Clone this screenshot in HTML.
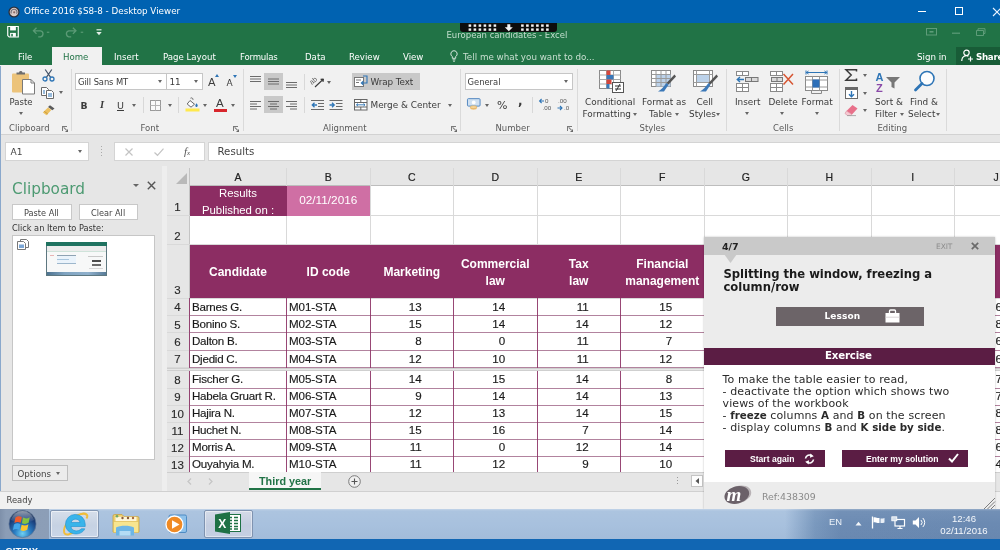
<!DOCTYPE html>
<html lang="en">
<head>
<meta charset="utf-8">
<title>Office 2016 $S8-8 - Desktop Viewer</title>
<style>
*{box-sizing:border-box;margin:0;padding:0}
html,body{width:1000px;height:550px;overflow:hidden;background:#e6e6e6}
body{font-family:"Liberation Sans",sans-serif;font-size:10px;color:#444;position:relative}
.a{position:absolute;white-space:nowrap}
#root{position:absolute;left:0;top:0;width:1000px;height:550px;overflow:hidden;will-change:transform}
.t{position:absolute;white-space:nowrap;line-height:1}
.w{color:#fff}
svg{position:absolute;overflow:visible}
/* title */
#titlebar{left:0;top:0;width:1000px;height:22.500px;background:#0062b1}
#green{left:0;top:22.500px;width:1000px;height:43.500px;padding-top:.5px;background:#217346}
#ribbon{left:0;top:65px;width:1000px;height:70px;background:#f1f1f1;border-bottom:1px solid #d2d2d2}
#fbar{left:0;top:135px;width:1000px;height:33px;background:#e6e6e6}
.tab{font-size:8.600px;color:#fff;top:51px;font-family:"DejaVu Sans","Liberation Sans",sans-serif}
.dj{font-family:"DejaVu Sans","Liberation Sans",sans-serif}
.grp{font-size:8.500px;color:#5a5a5a;top:124px;font-family:"DejaVu Sans","Liberation Sans",sans-serif}
.lbl{font-size:10px;color:#3b3b3b;font-family:"DejaVu Sans","Liberation Sans",sans-serif}
.sep{position:absolute;top:69px;width:1px;height:62px;background:#dadada}
.launch{position:absolute;top:125.500px;width:5px;height:5px;border-left:1px solid #7a7a7a;border-top:1px solid #7a7a7a}
.launch:after{content:"";position:absolute;left:2px;top:2px;width:0;height:0;border-left:3.500px solid transparent;border-bottom:3.500px solid #6a6a6a}
.launch:before{content:"";position:absolute;left:1px;top:.5px;width:4px;height:1px;background:#7a7a7a;transform:rotate(45deg);transform-origin:0 0}
.dd{position:absolute;width:0;height:0;border-left:2.5px solid transparent;border-right:2.5px solid transparent;border-top:3px solid #666}
.box{position:absolute;background:#fff;border:1px solid #c6c6c6}
.ch{font-size:10.500px;color:#222;-webkit-text-stroke:.2px #222}
.rh{font-size:11.500px;color:#2a2a2a;-webkit-text-stroke:.15px #2a2a2a}
.hw{font-size:12px;font-weight:bold;color:#fff}
.cd{font-size:11.600px;color:#1a1a1a;letter-spacing:-.1px;-webkit-text-stroke:.15px #1a1a1a}
#panel{left:704px;top:237px;width:291px;height:272px;background:#fff;font-family:"DejaVu Sans","Liberation Sans",sans-serif;box-shadow:0 0 2px rgba(0,0,0,.25)}
#panel .pt{position:absolute;white-space:nowrap;line-height:1}
.pb{position:absolute;background:#5b1d44}
#ptext b{font-size:10.300px;letter-spacing:0;line-height:0}
#ptext p{height:12px;line-height:12px;overflow:visible}
</style>
</head>
<body>
<div id="root">
<!-- ===== Citrix desktop viewer title bar ===== -->
<div id="titlebar" class="a">
  <svg style="left:8px;top:5.500px" width="12" height="12" viewBox="0 0 12 12"><circle cx="6" cy="6" r="5.600" fill="#2b2f3a"/><circle cx="6" cy="6" r="4.300" fill="#d9c9c6"/><path d="M3.300 7.500A3 3 0 1 1 8.600 7.800" fill="none" stroke="#6d6a72" stroke-width="1.100"/><circle cx="6.200" cy="6.300" r="1.100" fill="#8a6a64"/></svg>
  <span class="t w dj" style="left:24px;top:7.200px;font-size:8.750px">Office 2016 $S8-8 - Desktop Viewer</span>
  <div class="a" style="left:918px;top:11px;width:8px;height:1px;background:#fff"></div>
  <div class="a" style="left:955px;top:7px;width:8px;height:8px;border:1px solid #fff"></div>
  <svg style="left:993px;top:7.500px" width="8" height="8" viewBox="0 0 8 8"><path d="M0 0L8 8M8 0L0 8" stroke="#eaf4ff" stroke-width="1.100"/></svg>
</div>
<!-- ===== Excel title / QAT / tabs ===== -->
<div id="green" class="a">
  <!-- save -->
  <svg style="left:7px;top:3.500px" width="12" height="11.500" viewBox="0 0 12 12"><path d="M0.5 0.5H11.5V11.5H2L0.5 10Z" fill="none" stroke="#fff" stroke-width="1.2"/><rect x="3" y="1" width="6" height="3.6" fill="#fff"/><rect x="3" y="7.2" width="6" height="4" fill="#fff"/><rect x="4.2" y="8.2" width="1.6" height="2.6" fill="#217346"/></svg>
  <!-- undo -->
  <svg style="left:32px;top:4px" width="22" height="10.500" viewBox="0 0 22 11"><path d="M1 4H8.5A3.3 3.3 0 0 1 8.5 10.4H6M4.2 0.8L1 4L4.2 7.2" fill="none" stroke="#5b9a76" stroke-width="1.4"/><path d="M15 5.5H17.6" stroke="#5b9a76" stroke-width="1.2"/></svg>
  <!-- redo -->
  <svg style="left:64px;top:4px" width="22" height="10.500" viewBox="0 0 22 11"><path d="M12 4H4.5A3.3 3.3 0 0 0 4.5 10.4H7M8.8 0.8L12 4L8.8 7.2" fill="none" stroke="#5b9a76" stroke-width="1.4"/><path d="M17 5.5H19.6" stroke="#5b9a76" stroke-width="1.2"/></svg>
  <!-- customize qat -->
  <svg style="left:96px;top:6px" width="6" height="7" viewBox="0 0 6 7"><path d="M0.5 0.8H5.5" stroke="#e4efe8" stroke-width="1.2"/><path d="M0.3 3L3 6.2L5.7 3Z" fill="#e4efe8"/></svg>
  <span class="t dj" style="left:446.500px;top:8.500px;font-size:8.500px;color:#c4dfcf">European candidates - Excel</span>
  <!-- window ctrls (dimmed) -->
  <svg style="left:926px;top:5px" width="60" height="9" viewBox="0 0 60 9"><rect x="0.5" y="0.5" width="10" height="6.5" fill="none" stroke="#5e9c79" stroke-width="1"/><path d="M3.5 3.8H7.5" stroke="#5e9c79" stroke-width="1.6"/><path d="M26 5.2H34" stroke="#5e9c79" stroke-width="1.2"/><path d="M50.5 2.5H57.5V7.5H50.5ZM52 2.5V0.7H59V5.5H57.5" fill="none" stroke="#5e9c79" stroke-width="1"/></svg>
  <!-- tabs -->
  <span class="t tab" style="left:18px;top:30.500px">File</span>
  <div class="a" style="left:52px;top:24px;width:50px;height:19px;background:#f1f1f1"></div>
  <span class="t tab" style="left:63px;top:30.500px;color:#217346">Home</span>
  <span class="t tab" style="left:114px;top:30.500px">Insert</span>
  <span class="t tab" style="left:163px;top:30.500px">Page Layout</span>
  <span class="t tab" style="left:240px;top:30.500px;letter-spacing:-.2px">Formulas</span>
  <span class="t tab" style="left:305px;top:30.500px">Data</span>
  <span class="t tab" style="left:349px;top:30.500px">Review</span>
  <span class="t tab" style="left:403px;top:30.500px">View</span>
  <svg style="left:450px;top:27px" width="8" height="12" viewBox="0 0 8 12"><path d="M4 0.7A3.2 3.2 0 0 1 5.7 6.6V8.3H2.3V6.6A3.2 3.2 0 0 1 4 0.7Z" fill="none" stroke="#d6e6dc" stroke-width="1"/><path d="M2.6 9.8H5.4M3 11.2H5" stroke="#d6e6dc" stroke-width="0.9"/></svg>
  <span class="t dj" style="left:463px;top:30.500px;font-size:8.750px;color:#c9dfd1">Tell me what you want to do...</span>
  <span class="t w dj" style="left:917px;top:30px;font-size:8.700px">Sign in</span>
  <div class="a" style="left:956px;top:24px;width:44px;height:18px;background:#185c37"></div>
  <svg style="left:961px;top:26px" width="13" height="13" viewBox="0 0 13 13"><circle cx="5.5" cy="3.8" r="2.7" fill="none" stroke="#fff" stroke-width="1.2"/><path d="M0.8 12V11A4.6 4.6 0 0 1 7.4 7.2" fill="none" stroke="#fff" stroke-width="1.2"/><path d="M9.5 7.5V12.5M7 10H12" stroke="#fff" stroke-width="1.2"/></svg>
  <span class="t w dj" style="left:976px;top:30px;font-size:8.700px;font-weight:bold;letter-spacing:-.3px">Share</span>
</div>
<!-- Citrix toolbar handle -->
<div class="a" style="left:459.5px;top:22.5px;width:97px;height:9.5px;background:#0d0d0d;border-radius:0 0 3px 3px"></div>
<svg style="left:459.5px;top:22.5px" width="97" height="9.5" viewBox="0 0 97 9.5">
  <g fill="#f4f4f4">
    <rect x="8.6" y="1.4" width="2.6" height="2.4"/><rect x="13.6" y="1.4" width="2.6" height="2.4"/><rect x="18.6" y="1.4" width="2.6" height="2.4"/><rect x="23.6" y="1.4" width="2.6" height="2.4"/><rect x="28.6" y="1.4" width="2.6" height="2.4"/><rect x="33.6" y="1.4" width="2.6" height="2.4"/><rect x="8.6" y="5.4" width="2.6" height="2.4"/><rect x="13.6" y="5.4" width="2.6" height="2.4"/><rect x="18.6" y="5.4" width="2.6" height="2.4"/><rect x="23.6" y="5.4" width="2.6" height="2.4"/><rect x="28.6" y="5.4" width="2.6" height="2.4"/><rect x="33.6" y="5.4" width="2.6" height="2.4"/><rect x="61.1" y="1.4" width="2.6" height="2.4"/><rect x="66.1" y="1.4" width="2.6" height="2.4"/><rect x="71.1" y="1.4" width="2.6" height="2.4"/><rect x="76.1" y="1.4" width="2.6" height="2.4"/><rect x="81.1" y="1.4" width="2.6" height="2.4"/><rect x="86.1" y="1.4" width="2.6" height="2.4"/><rect x="61.1" y="5.4" width="2.6" height="2.4"/><rect x="66.1" y="5.4" width="2.6" height="2.4"/><rect x="71.1" y="5.4" width="2.6" height="2.4"/><rect x="76.1" y="5.4" width="2.6" height="2.4"/><rect x="81.1" y="5.4" width="2.6" height="2.4"/><rect x="86.1" y="5.4" width="2.6" height="2.4"/>
    <path d="M47.3 1.2H50.3V4.2H52.8L48.8 8.2L44.8 4.2H47.3Z"/>
  </g>
</svg>
<!-- ===== Ribbon ===== -->
<div id="ribbon" class="a"></div>
<!-- Clipboard group -->
<svg style="left:11px;top:70px" width="25" height="25" viewBox="0 0 25 25">
  <rect x="1" y="3.5" width="17" height="19" rx="1" fill="#ecc37a"/>
  <path d="M5.5 4.5V2.5H8A1.8 1.8 0 0 1 11.5 2.5H14V4.5Z" fill="#6d6d6d"/>
  <path d="M11.5 9.5H20L23.5 13V24H11.5Z" fill="#fff" stroke="#7a7a7a" stroke-width="1"/>
  <path d="M20 9.5V13H23.5" fill="none" stroke="#7a7a7a" stroke-width="1"/>
</svg>
<span class="t lbl" style="left:9.5px;top:98px;font-size:8.5px">Paste</span>
<div class="dd" style="left:19px;top:112px"></div>
<!-- cut -->
<svg style="left:42px;top:69px" width="13" height="13" viewBox="0 0 13 13"><path d="M3.2 0.5L8.8 8.6M9.8 0.5L4.2 8.6" stroke="#44546a" stroke-width="1.2" fill="none"/><circle cx="3" cy="10" r="2" fill="none" stroke="#2e75b6" stroke-width="1.3"/><circle cx="10" cy="10" r="2" fill="none" stroke="#2e75b6" stroke-width="1.3"/></svg>
<!-- copy -->
<svg style="left:41px;top:87px" width="14" height="12" viewBox="0 0 14 12"><path d="M0.5 0.5H5.5L7.5 2.5V8.5H0.5Z" fill="#fff" stroke="#6a6a6a" stroke-width="1"/><path d="M5.5 3.5H10.5L12.5 5.5V11.5H5.5Z" fill="#fff" stroke="#6a6a6a" stroke-width="1"/><path d="M7 7H11M7 9H11" stroke="#2e75b6" stroke-width="1"/><path d="M2 4H4M2 6H4" stroke="#2e75b6" stroke-width="1"/></svg>
<div class="dd" style="left:59px;top:91px"></div>
<!-- format painter -->
<svg style="left:42px;top:104px" width="14" height="12" viewBox="0 0 14 12"><path d="M8 1.2L12.5 4.5L10.3 6.2L6 3Z" fill="#5a5a5a"/><path d="M6 3.4L9.3 6L4.5 11.2L0.8 8.6Z" fill="#ecc060"/><path d="M2.2 7.3L5.8 10" stroke="#c99b3a" stroke-width="1"/></svg>
<span class="t grp" style="left:9px">Clipboard</span>
<div class="launch" style="left:62px"></div>
<div class="sep" style="left:71px"></div>

<!-- Font group -->
<div class="box" style="left:75px;top:73px;width:92px;height:17px"></div>
<span class="t lbl" style="left:78px;top:78px;font-size:8.4px;letter-spacing:-.1px">Gill Sans MT</span>
<div class="dd" style="left:158px;top:80px"></div>
<div class="box" style="left:166px;top:73px;width:37px;height:17px"></div>
<span class="t lbl" style="left:169.5px;top:78px;font-size:8.8px">11</span>
<div class="dd" style="left:194px;top:80px"></div>
<span class="t lbl" style="left:208px;top:76.5px;font-size:11px">A</span>
<svg style="left:215px;top:74px" width="4" height="3" viewBox="0 0 4 3"><path d="M0 3L2 0L4 3Z" fill="#2e75b6"/></svg>
<span class="t lbl" style="left:226.5px;top:78.5px;font-size:9px">A</span>
<svg style="left:232.5px;top:75px" width="4" height="3" viewBox="0 0 4 3"><path d="M0 0L2 3L4 0Z" fill="#2e75b6"/></svg>
<span class="t lbl" style="left:80.5px;top:100.5px;font-size:9.3px;font-weight:bold">B</span>
<span class="t lbl" style="left:100px;top:100px;font-size:10.5px;font-style:italic;font-family:'Liberation Serif',serif;font-weight:bold">I</span>
<span class="t lbl" style="left:117px;top:100.5px;font-size:9.5px;text-decoration:underline">U</span>
<div class="dd" style="left:132px;top:104px"></div>
<div class="a" style="left:143px;top:97px;width:1px;height:16px;background:#d8d8d8"></div>
<svg style="left:150px;top:100px" width="11" height="11" viewBox="0 0 11 11"><rect x="0.5" y="0.5" width="10" height="10" fill="#fafafa" stroke="#9a9a9a" stroke-width="1"/><path d="M5.5 0.5V10.5M0.5 5.5H10.5" stroke="#b5b5b5" stroke-width="1"/></svg>
<div class="dd" style="left:168px;top:104px"></div>
<div class="a" style="left:178px;top:97px;width:1px;height:16px;background:#d8d8d8"></div>
<svg style="left:185px;top:97px" width="16" height="15" viewBox="0 0 16 15"><path d="M5 3.5L9.5 7.2L6 10.2L2.2 7Z" fill="#fff" stroke="#666" stroke-width="1"/><path d="M5.5 1.2A1.6 1.6 0 0 1 8 2.8" fill="none" stroke="#666" stroke-width="1"/><path d="M11.5 6.3C12.6 7.8 13.2 8.6 12.4 9.4A1.1 1.1 0 0 1 10.6 9.4C9.9 8.6 10.6 7.6 11.5 6.3Z" fill="#2e75b6"/><rect x="0.5" y="11.5" width="14" height="3" fill="#ffe94d"/></svg>
<div class="dd" style="left:203px;top:104px"></div>
<span class="t" style="left:216px;top:98px;font-size:11.5px;color:#3b3b3b">A</span>
<div class="a" style="left:213.5px;top:109px;width:13px;height:3px;background:#d8262c"></div>
<div class="dd" style="left:231px;top:104px"></div>
<span class="t grp" style="left:140.5px">Font</span>
<div class="launch" style="left:233px"></div>
<div class="sep" style="left:243px"></div>

<!-- Alignment group -->
<div class="a" style="left:264px;top:73px;width:19px;height:17px;background:#c9c9c9"></div>
<div class="a" style="left:264px;top:96px;width:19px;height:17px;background:#c9c9c9"></div>
<svg style="left:249px;top:73px" width="52" height="40" viewBox="0 0 52 40">
  <g stroke="#6b6b6b" stroke-width="1" fill="none">
    <path d="M1 3.5H12M1 6H12M1 8.5H12"/>
    <path d="M19 6H30M19 8.5H30M19 11H30"/>
    <path d="M37 9.5H48M37 12H48M37 14.5H48"/>
    <path d="M1 28.5H12M1 31H8M1 33.5H12M1 36H8"/>
    <path d="M19 28.5H30M21 31H28M19 33.5H30M21 36H28"/>
    <path d="M37 28.5H48M41 31H48M37 33.5H48M41 36H48"/>
  </g>
</svg>
<div class="a" style="left:304px;top:74px;width:1px;height:16px;background:#d8d8d8"></div>
<div class="a" style="left:304px;top:97px;width:1px;height:16px;background:#d8d8d8"></div>
<svg style="left:311px;top:75px" width="14" height="13" viewBox="0 0 14 13"><text x="0" y="8" font-family="Liberation Sans,sans-serif" font-size="7" fill="#555" transform="rotate(-40 3 8)">ab</text><path d="M4 12L12.5 4M12.5 4L9.6 4.4M12.5 4L12 7" stroke="#3a3a3a" stroke-width="1.1" fill="none"/></svg>
<div class="dd" style="left:327px;top:81px"></div>
<svg style="left:311px;top:100px" width="32" height="11" viewBox="0 0 32 11">
  <g stroke="#6b6b6b" stroke-width="1" fill="none"><path d="M0 0.5H13M7 3.5H13M7 6.5H13M0 9.5H13"/><path d="M18.5 0.5H31.500M25 3.500H31.500M25 6.500H31.500M18.500 9.500H31.500"/></g>
  <path d="M6 5H1.500M3.500 2.800L1.300 5L3.500 7.200" stroke="#2e75b6" stroke-width="1.3" fill="none"/>
  <path d="M18.500 5H23M21 2.800L23.200 5L21 7.200" stroke="#2e75b6" stroke-width="1.3" fill="none"/>
</svg>
<div class="a" style="left:352px;top:73px;width:68px;height:17px;background:#c9c9c9"></div>
<svg style="left:354px;top:75px" width="14" height="13" viewBox="0 0 14 13"><rect x="0.5" y="2.500" width="9" height="9" fill="#fff" stroke="#777" stroke-width="1"/><path d="M2 5H7M2 7.500H5" stroke="#777" stroke-width="1"/><path d="M9 1H13V8H7.500M9.300 6.200L7.300 8L9.300 9.800" fill="none" stroke="#2e75b6" stroke-width="1.100"/></svg>
<span class="t lbl" style="left:370.5px;top:78px;font-size:8.8px;letter-spacing:-.1px">Wrap Text</span>
<svg style="left:354px;top:99px" width="14" height="12" viewBox="0 0 14 12"><rect x="0.500" y="0.500" width="12.500" height="10.500" fill="#fff" stroke="#666" stroke-width="1"/><path d="M0.500 3.500H13M0.500 8H13M6.800 0.500V3.500M6.800 8V11" stroke="#666" stroke-width="1"/><path d="M2.500 5.800H11M4 4.500L2.500 5.800L4 7.100M9.500 4.500L11 5.800L9.500 7.100" fill="none" stroke="#2e75b6" stroke-width=".9"/></svg>
<span class="t lbl" style="left:370.5px;top:101px;font-size:8.9px">Merge &amp; Center</span>
<div class="dd" style="left:448px;top:104px"></div>
<span class="t grp" style="left:323px">Alignment</span>
<div class="launch" style="left:451px"></div>
<div class="sep" style="left:460px"></div>
<!-- Number group -->
<div class="box" style="left:465px;top:73px;width:108px;height:17px"></div>
<span class="t lbl" style="left:467.5px;top:78px;font-size:8.4px">General</span>
<div class="dd" style="left:564px;top:80px"></div>
<svg style="left:466.500px;top:98px" width="14" height="12.500" viewBox="0 0 15 13"><rect x="0.500" y="0.500" width="13.500" height="8" rx="1" fill="#cfe0f1" stroke="#4a82bd" stroke-width="1"/><circle cx="7.200" cy="4.500" r="2" fill="#fff"/><ellipse cx="7" cy="10.800" rx="3.600" ry="1.500" fill="#f0c27a"/><ellipse cx="7" cy="9.600" rx="3.600" ry="1.500" fill="#f6d59a" stroke="#d8a048" stroke-width=".5"/></svg>
<div class="dd" style="left:485px;top:104px"></div>
<span class="t lbl" style="left:497px;top:99.500px;font-size:11px">%</span>
<span class="t lbl" style="left:518px;top:95px;font-size:12px;font-weight:bold">,</span>
<div class="a" style="left:532px;top:97px;width:1px;height:16px;background:#d8d8d8"></div>
<svg style="left:539px;top:98px" width="32" height="13" viewBox="0 0 32 13">
  <g font-family="Liberation Sans,sans-serif" font-size="6.200" fill="#555"><text x="6" y="5">0</text><text x="3.500" y="12">.00</text><text x="19" y="5">.00</text><text x="25" y="12">.0</text></g>
  <path d="M5 3H0.800M2.600 1L0.600 3L2.600 5" fill="none" stroke="#2e75b6" stroke-width="1.100"/>
  <path d="M18.500 10H23M21 8L23 10L21 12" fill="none" stroke="#2e75b6" stroke-width="1.100"/>
</svg>
<span class="t grp" style="left:495.500px">Number</span>
<div class="launch" style="left:567px"></div>
<div class="sep" style="left:577px"></div>

<!-- Styles group -->
<svg style="left:599px;top:70px" width="26" height="24" viewBox="0 0 26 24">
  <rect x="0.500" y="0.500" width="21" height="18" fill="#fff" stroke="#8a8a8a" stroke-width="1"/>
  <path d="M0.500 5H21.500M0.500 9.500H21.500M0.500 14H21.500M7.500 0.500V18.500M14.500 0.500V18.500" stroke="#a9a9a9" stroke-width="1"/>
  <rect x="7.500" y="0.500" width="4" height="4.500" fill="#d4473d"/><rect x="7.500" y="5" width="7" height="4.500" fill="#3b78b8"/><rect x="7.500" y="9.500" width="5" height="4.500" fill="#d4473d"/><rect x="7.500" y="14" width="3" height="4.500" fill="#3b78b8"/>
  <rect x="13.500" y="12.500" width="11" height="10" fill="#fff" stroke="#555" stroke-width="1"/>
  <path d="M16 16H22M16 19H22M21 14L17 21" stroke="#333" stroke-width="1"/>
</svg>
<span class="t lbl" style="left:585px;top:98px;font-size:8.900px">Conditional</span>
<span class="t lbl" style="left:582.500px;top:110px;font-size:8.900px">Formatting</span>
<div class="dd" style="left:633px;top:113px"></div>
<svg style="left:651px;top:70px" width="26" height="24" viewBox="0 0 26 24">
  <rect x="0.500" y="0.500" width="19" height="16" fill="#fff" stroke="#8a8a8a" stroke-width="1"/>
  <rect x="5" y="4.500" width="14.500" height="12" fill="#bcd2ea"/>
  <path d="M0.500 4.500H19.500M0.500 8.500H19.500M0.500 12.500H19.500M5 0.500V16.500M10 0.500V16.500M15 0.500V16.500" stroke="#9a9a9a" stroke-width="1"/>
  <path d="M23.500 4.500L25 6.500L17.500 14.500L15.500 13Z" fill="#555"/>
  <path d="M15.500 13L17.500 14.800L13 21.500L7 21.500C10 20 12.500 17 15.500 13Z" fill="#3b78b8"/>
</svg>
<span class="t lbl" style="left:642px;top:98px;font-size:8.900px">Format as</span>
<span class="t lbl" style="left:649px;top:110px;font-size:8.900px">Table</span>
<div class="dd" style="left:675px;top:113px"></div>
<svg style="left:693px;top:70px" width="26" height="24" viewBox="0 0 26 24">
  <rect x="0.500" y="0.500" width="19" height="16" fill="#fff" stroke="#8a8a8a" stroke-width="1"/>
  <rect x="3.500" y="4.500" width="13" height="8" fill="#bcd2ea"/>
  <path d="M0.500 4.500H19.500M0.500 12.500H19.500M3.500 0.500V16.500M16.500 0.500V16.500" stroke="#9a9a9a" stroke-width="1"/>
  <path d="M23.500 4.500L25 6.500L17.500 14.500L15.500 13Z" fill="#555"/>
  <path d="M15.500 13L17.500 14.800L13 21.500L7 21.500C10 20 12.500 17 15.500 13Z" fill="#3b78b8"/>
</svg>
<span class="t lbl" style="left:696.500px;top:98px;font-size:8.900px">Cell</span>
<span class="t lbl" style="left:689px;top:110px;font-size:8.900px">Styles</span>
<div class="dd" style="left:716px;top:113px"></div>
<span class="t grp" style="left:639.500px">Styles</span>
<div class="sep" style="left:726px"></div>

<!-- Cells group -->
<svg style="left:736px;top:71px" width="23" height="22" viewBox="0 0 23 22">
  <g fill="#fff" stroke="#8a8a8a" stroke-width="1"><rect x="0.500" y="0.500" width="6" height="4"/><rect x="6.500" y="0.500" width="6" height="4"/><rect x="0.500" y="12.500" width="6" height="4"/><rect x="6.500" y="12.500" width="6" height="4"/><rect x="0.500" y="16.500" width="6" height="4"/><rect x="6.500" y="16.500" width="6" height="4"/></g>
  <rect x="9.500" y="6.500" width="12.500" height="4" fill="#d9d9d9" stroke="#777" stroke-width="1"/><path d="M15.500 6.500V10.500" stroke="#777"/>
  <path d="M8 8.500H1.500M4 6L1.300 8.500L4 11" fill="none" stroke="#2e75b6" stroke-width="1.400"/>
</svg>
<span class="t lbl" style="left:735px;top:98px;font-size:8.900px">Insert</span>
<div class="dd" style="left:744.500px;top:112px"></div>
<svg style="left:770px;top:71px" width="25" height="22" viewBox="0 0 25 22">
  <g fill="#fff" stroke="#8a8a8a" stroke-width="1"><rect x="0.500" y="0.500" width="6" height="4"/><rect x="6.500" y="0.500" width="6" height="4"/><rect x="0.500" y="12.500" width="6" height="4"/><rect x="6.500" y="12.500" width="6" height="4"/><rect x="0.500" y="16.500" width="6" height="4"/><rect x="6.500" y="16.500" width="6" height="4"/></g>
  <rect x="1.500" y="6.500" width="11" height="4" fill="#d9d9d9" stroke="#777" stroke-width="1"/><path d="M7 6.500V10.500" stroke="#777"/>
  <path d="M13.500 3L23 13.500M23 3L13.500 13.500" stroke="#d65532" stroke-width="1.500"/>
</svg>
<span class="t lbl" style="left:768.500px;top:98px;font-size:8.900px">Delete</span>
<div class="dd" style="left:779.500px;top:112px"></div>
<svg style="left:805px;top:70px" width="23" height="24" viewBox="0 0 23 24">
  <path d="M1 2.500H22M1 0.500V4.500M22 0.500V4.500M3.500 1L1.500 2.500L3.500 4M19.500 1L21.500 2.500L19.500 4" fill="none" stroke="#2e75b6" stroke-width="1"/>
  <rect x="0.500" y="6.500" width="22" height="14" fill="#fff" stroke="#8a8a8a" stroke-width="1"/>
  <path d="M0.500 10H22.500M0.500 17H22.500M7.500 6.500V20.500M14.500 6.500V20.500" stroke="#9a9a9a" stroke-width="1"/>
  <rect x="7.500" y="9.500" width="7" height="8" fill="#2e6fb8"/>
  <path d="M6.500 20.500V23.500H16.500V20.500" fill="none" stroke="#8a8a8a" stroke-width="1"/>
</svg>
<span class="t lbl" style="left:801.500px;top:98px;font-size:8.900px">Format</span>
<div class="dd" style="left:814.500px;top:112px"></div>
<span class="t grp" style="left:773px">Cells</span>
<div class="sep" style="left:839px"></div>

<!-- Editing group -->
<svg style="left:845px;top:69px" width="13" height="12" viewBox="0 0 13 12"><path d="M11.500 2.500V0.800H1L6.200 6L1 11.200H11.500V9.500" fill="none" stroke="#3a3a3a" stroke-width="1.500"/></svg>
<div class="dd" style="left:863px;top:74px"></div>
<svg style="left:845px;top:87px" width="13" height="12" viewBox="0 0 13 12"><rect x="0.500" y="0.500" width="12" height="11" fill="#fff" stroke="#6a6a6a" stroke-width="1"/><rect x="0.500" y="0.500" width="12" height="2.500" fill="#6a6a6a"/><path d="M6.500 4V9.500M4 7.200L6.500 9.800L9 7.200" fill="none" stroke="#2e75b6" stroke-width="1.400"/></svg>
<div class="dd" style="left:863px;top:92px"></div>
<svg style="left:844px;top:104px" width="15" height="12" viewBox="0 0 15 12"><path d="M8.500 1L13.500 4.500L8 10.500L2.500 7Z" fill="#e8708a"/><path d="M2.500 7L8 10.500L6.800 11.500H3.500L1 9.500Z" fill="#f6c9d2" stroke="#d8889a" stroke-width=".6"/><path d="M3 11.600H12" stroke="#999" stroke-width=".8"/></svg>
<div class="dd" style="left:863px;top:109px"></div>
<svg style="left:875px;top:70px" width="27" height="24" viewBox="0 0 27 24">
  <text x="0.500" y="10.500" font-family="Liberation Sans,sans-serif" font-weight="bold" font-size="11" fill="#2e75b6">A</text>
  <text x="1" y="21.500" font-family="Liberation Sans,sans-serif" font-weight="bold" font-size="11" fill="#8a4aa8">Z</text>
  <path d="M11 7H25L19.500 12.500V18.500L16.500 17V12.500Z" fill="#777"/>
</svg>
<span class="t lbl" style="left:875px;top:98px;font-size:8.900px">Sort &amp;</span>
<span class="t lbl" style="left:875px;top:110px;font-size:8.900px">Filter</span>
<div class="dd" style="left:899.500px;top:113px"></div>
<svg style="left:912px;top:70px" width="24" height="24" viewBox="0 0 24 24"><circle cx="15" cy="8.500" r="7" fill="#fdfdfd" stroke="#2e75b6" stroke-width="1.600"/><path d="M10 13.500L3.500 20" stroke="#2e75b6" stroke-width="2.800" stroke-linecap="round"/></svg>
<span class="t lbl" style="left:910px;top:98px;font-size:8.900px">Find &amp;</span>
<span class="t lbl" style="left:908px;top:110px;font-size:8.900px">Select</span>
<div class="dd" style="left:935.500px;top:113px"></div>
<span class="t grp" style="left:877.500px">Editing</span>
<div class="sep" style="left:946px"></div>
<!-- ===== Formula bar ===== -->
<div id="fbar" class="a"></div>
<div class="box" style="left:5px;top:142px;width:84px;height:19px;border-color:#d4d4d4"></div>
<span class="t dj" style="left:10.500px;top:147.500px;font-size:9.100px;color:#444">A1</span>
<div class="dd" style="left:78px;top:150px"></div>
<div class="a" style="left:101px;top:146px;width:1px;height:1px;background:#aaa;box-shadow:0 3px 0 #aaa,0 6px 0 #aaa,0 9px 0 #aaa"></div>
<div class="box" style="left:114px;top:142px;width:91px;height:19px;border-color:#d4d4d4"></div>
<svg style="left:125px;top:148px" width="8" height="8" viewBox="0 0 8 8"><path d="M0.500 0.500L7.500 7.500M7.500 0.500L0.500 7.500" stroke="#c3c3c3" stroke-width="1.200"/></svg>
<svg style="left:154px;top:148px" width="10" height="8" viewBox="0 0 10 8"><path d="M0.500 4.500L3.500 7.300L9.500 0.700" fill="none" stroke="#c3c3c3" stroke-width="1.200"/></svg>
<span class="t" style="left:184px;top:146px;font-size:11px;color:#555;font-family:'Liberation Serif',serif;font-style:italic">f<span style="font-size:7px">x</span></span>
<div class="box" style="left:208px;top:142px;width:800px;height:19px;border-color:#d4d4d4"></div>
<span class="t dj" style="left:217.500px;top:146.800px;font-size:10.200px;color:#444">Results</span>
<!-- ===== Clipboard task pane ===== -->
<div class="a" style="left:0;top:166px;width:165px;height:326px;background:#e6e6e6"></div>
<div class="a" style="left:0;top:66px;width:1px;height:442px;background:#8aa8cc"></div>
<span class="t dj" style="left:12px;top:182px;font-size:15.300px;color:#4d9a72">Clipboard</span>
<div class="dd" style="left:133px;top:184px;border-left-width:3px;border-right-width:3px;border-top-width:3.500px"></div>
<svg style="left:147px;top:181px" width="9" height="9" viewBox="0 0 9 9"><path d="M0.800 0.800L8.200 8.200M8.200 0.800L0.800 8.200" stroke="#555" stroke-width="1.400"/></svg>
<div class="box" style="left:12px;top:204px;width:60px;height:16px;border-color:#c8c8c8"></div>
<span class="t dj" style="left:24px;top:208.500px;font-size:8.200px;color:#444">Paste All</span>
<div class="box" style="left:79px;top:204px;width:59px;height:16px;border-color:#c8c8c8"></div>
<span class="t dj" style="left:91px;top:208.500px;font-size:8.200px;color:#444">Clear All</span>
<span class="t dj" style="left:12px;top:224px;font-size:8.200px;color:#333">Click an Item to Paste:</span>
<div class="box" style="left:12px;top:235px;width:143px;height:225px;border-color:#c6c6c6"></div>
<svg style="left:17px;top:239px" width="14" height="12" viewBox="0 0 14 12"><path d="M3.500 0.500H9.500L11.500 2.500V8.500H3.500Z" fill="#fff" stroke="#777" stroke-width="1"/><path d="M0.500 2.500H6.500L8.500 4.500V10.500H0.500Z" fill="#fff" stroke="#777" stroke-width="1"/><rect x="2" y="5.500" width="5" height="3.500" fill="#7aa6d6"/></svg>
<!-- thumbnail -->
<div class="a" style="left:45.500px;top:241.500px;width:61px;height:34px;background:#f7f8f8;border:1px solid #5d7780"></div>
<div class="a" style="left:45.500px;top:241.500px;width:61px;height:4.500px;background:#1f7260"></div>
<div class="a" style="left:46.500px;top:246px;width:59px;height:6px;background:#ececec;border-bottom:1px solid #cfe3da"></div>
<div class="a" style="left:50px;top:255px;width:4px;height:1px;background:#e8b4b4"></div>
<div class="a" style="left:57px;top:255px;width:19px;height:9px;background:#eaf3fb;border-top:1.500px solid #8fa3b3;border-bottom:1.500px solid #9db7cc"></div>
<div class="a" style="left:57px;top:259px;width:12px;height:1px;background:#a9c6de"></div>
<div class="a" style="left:88px;top:256px;width:15px;height:1px;background:#c9c9c9"></div>
<div class="a" style="left:91.500px;top:259.500px;width:9.500px;height:2px;background:#4a4a4a"></div>
<div class="a" style="left:91.500px;top:263.500px;width:9.500px;height:2px;background:#6a6a6a"></div>
<div class="a" style="left:89px;top:268px;width:14px;height:1px;background:#d6d6d6"></div>
<div class="a" style="left:46.500px;top:271.500px;width:59px;height:3px;background:linear-gradient(90deg,#4d7390,#7fa3c0 30%,#8fb0cc 70%,#587b98)"></div>
<div class="box" style="left:12px;top:465px;width:56px;height:16px;border-color:#bdbdbd;background:#ececec"></div>
<span class="t dj" style="left:17.500px;top:469.500px;font-size:8.700px;color:#444">Options</span>
<div class="dd" style="left:56px;top:472px"></div>
<!-- ===== Worksheet grid ===== -->
<div class="a" id="grid" style="left:166px;top:168px;width:834px;height:304px;background:#fff;overflow:hidden">
<div class="a" style="left:0.0px;top:-0.5px;width:834.0px;height:18.0px;background:#e6e6e6;border-bottom:1px solid #bdbdbd"></div>
<div class="a" style="left:0.0px;top:0.0px;width:23.5px;height:304.0px;background:#e6e6e6;border-right:1px solid #c4c4c4"></div>
<svg style="left:10px;top:5px" width="11" height="11" viewBox="0 0 11 11"><path d="M11 0V11H0Z" fill="#b9b9b9"/></svg>
<div class="a" style="left:120.0px;top:0.0px;width:1.0px;height:304.0px;background:#d9d9d9"></div>
<div class="a" style="left:203.5px;top:0.0px;width:1.0px;height:304.0px;background:#d9d9d9"></div>
<div class="a" style="left:287.0px;top:0.0px;width:1.0px;height:304.0px;background:#d9d9d9"></div>
<div class="a" style="left:370.5px;top:0.0px;width:1.0px;height:304.0px;background:#d9d9d9"></div>
<div class="a" style="left:454.0px;top:0.0px;width:1.0px;height:304.0px;background:#d9d9d9"></div>
<div class="a" style="left:537.5px;top:0.0px;width:1.0px;height:304.0px;background:#d9d9d9"></div>
<div class="a" style="left:621.0px;top:0.0px;width:1.0px;height:304.0px;background:#d9d9d9"></div>
<div class="a" style="left:704.5px;top:0.0px;width:1.0px;height:304.0px;background:#d9d9d9"></div>
<div class="a" style="left:788.0px;top:0.0px;width:1.0px;height:304.0px;background:#d9d9d9"></div>
<div class="a" style="left:0.0px;top:47.1px;width:834.0px;height:1.0px;background:#d9d9d9"></div>
<div class="a" style="left:0.0px;top:76.1px;width:834.0px;height:1.0px;background:#d9d9d9"></div>
<div class="a" style="left:0.0px;top:129.9px;width:834.0px;height:1.0px;background:#d9d9d9"></div>
<div class="a" style="left:0.0px;top:147.1px;width:834.0px;height:1.0px;background:#d9d9d9"></div>
<div class="a" style="left:0.0px;top:164.4px;width:834.0px;height:1.0px;background:#d9d9d9"></div>
<div class="a" style="left:0.0px;top:181.6px;width:834.0px;height:1.0px;background:#d9d9d9"></div>
<div class="a" style="left:0.0px;top:198.9px;width:834.0px;height:1.0px;background:#d9d9d9"></div>
<div class="a" style="left:0.0px;top:219.6px;width:834.0px;height:1.0px;background:#d9d9d9"></div>
<div class="a" style="left:0.0px;top:236.7px;width:834.0px;height:1.0px;background:#d9d9d9"></div>
<div class="a" style="left:0.0px;top:253.8px;width:834.0px;height:1.0px;background:#d9d9d9"></div>
<div class="a" style="left:0.0px;top:270.9px;width:834.0px;height:1.0px;background:#d9d9d9"></div>
<div class="a" style="left:0.0px;top:288.0px;width:834.0px;height:1.0px;background:#d9d9d9"></div>
<div class="a" style="left:0.0px;top:305.1px;width:834.0px;height:1.0px;background:#d9d9d9"></div>
<span class="t ch" style="left:62.0px;top:3.6px;width:20px;text-align:center">A</span>
<span class="t ch" style="left:152.2px;top:3.6px;width:20px;text-align:center">B</span>
<span class="t ch" style="left:235.8px;top:3.6px;width:20px;text-align:center">C</span>
<span class="t ch" style="left:319.2px;top:3.6px;width:20px;text-align:center">D</span>
<span class="t ch" style="left:402.8px;top:3.6px;width:20px;text-align:center">E</span>
<span class="t ch" style="left:486.2px;top:3.6px;width:20px;text-align:center">F</span>
<span class="t ch" style="left:569.8px;top:3.6px;width:20px;text-align:center">G</span>
<span class="t ch" style="left:653.2px;top:3.6px;width:20px;text-align:center">H</span>
<span class="t ch" style="left:736.8px;top:3.6px;width:20px;text-align:center">I</span>
<span class="t ch" style="left:820.2px;top:3.6px;width:20px;text-align:center">J</span>
<span class="t rh" style="left:0;top:33.8px;width:23px;text-align:center">1</span>
<span class="t rh" style="left:0;top:62.8px;width:23px;text-align:center">2</span>
<span class="t rh" style="left:0;top:116.6px;width:23px;text-align:center">3</span>
<span class="t rh" style="left:0;top:134.3px;width:23px;text-align:center">4</span>
<span class="t rh" style="left:0;top:151.5px;width:23px;text-align:center">5</span>
<span class="t rh" style="left:0;top:168.8px;width:23px;text-align:center">6</span>
<span class="t rh" style="left:0;top:186.0px;width:23px;text-align:center">7</span>
<span class="t rh" style="left:0;top:206.9px;width:23px;text-align:center">8</span>
<span class="t rh" style="left:0;top:224.0px;width:23px;text-align:center">9</span>
<span class="t rh" style="left:0;top:241.1px;width:23px;text-align:center">10</span>
<span class="t rh" style="left:0;top:258.2px;width:23px;text-align:center">11</span>
<span class="t rh" style="left:0;top:275.3px;width:23px;text-align:center">12</span>
<span class="t rh" style="left:0;top:292.4px;width:23px;text-align:center">13</span>
<div class="a" style="left:23.5px;top:17.5px;width:97.0px;height:30.5px;background:#8c2d63"></div>
<div class="a" style="left:120.5px;top:17.5px;width:83.5px;height:30.5px;background:#cf6fa4"></div>
<div class="a" style="left:23.5px;top:76.6px;width:810.5px;height:53.8px;background:#8c2d63"></div>
<span class="t hw" style="left:23.5px;top:19.5px;width:97px;text-align:center;font-weight:normal;font-size:11.4px">Results</span>
<span class="t hw" style="left:23.5px;top:36.5px;width:97px;text-align:center;font-weight:normal;font-size:11.4px">Published on :</span>
<span class="t hw" style="left:120.5px;top:27px;width:83.5px;text-align:center;font-weight:normal;font-size:11.8px">02/11/2016</span>
<span class="t hw" style="left:23.5px;top:97.5px;width:97.0px;text-align:center">Candidate</span>
<span class="t hw" style="left:120.5px;top:97.5px;width:83.5px;text-align:center">ID code</span>
<span class="t hw" style="left:204.0px;top:97.5px;width:83.5px;text-align:center">Marketing</span>
<span class="t hw" style="left:287.5px;top:89.5px;width:83.5px;text-align:center">Commercial</span>
<span class="t hw" style="left:287.5px;top:106.5px;width:83.5px;text-align:center">law</span>
<span class="t hw" style="left:371.0px;top:89.5px;width:83.5px;text-align:center">Tax</span>
<span class="t hw" style="left:371.0px;top:106.5px;width:83.5px;text-align:center">law</span>
<span class="t hw" style="left:454.5px;top:89.5px;width:83.5px;text-align:center">Financial</span>
<span class="t hw" style="left:454.5px;top:106.5px;width:83.5px;text-align:center">management</span>
<div class="a" style="left:23.0px;top:130.4px;width:1.0px;height:173.6px;background:#8c2d63;opacity:.85"></div>
<div class="a" style="left:120.0px;top:130.4px;width:1.0px;height:173.6px;background:#8c2d63;opacity:.85"></div>
<div class="a" style="left:203.5px;top:130.4px;width:1.0px;height:173.6px;background:#8c2d63;opacity:.85"></div>
<div class="a" style="left:287.0px;top:130.4px;width:1.0px;height:173.6px;background:#8c2d63;opacity:.85"></div>
<div class="a" style="left:370.5px;top:130.4px;width:1.0px;height:173.6px;background:#8c2d63;opacity:.85"></div>
<div class="a" style="left:454.0px;top:130.4px;width:1.0px;height:173.6px;background:#8c2d63;opacity:.85"></div>
<div class="a" style="left:537.5px;top:130.4px;width:1.0px;height:173.6px;background:#8c2d63;opacity:.85"></div>
<div class="a" style="left:23.5px;top:147.1px;width:810.5px;height:1.0px;background:#8c2d63;opacity:.5"></div>
<div class="a" style="left:23.5px;top:164.4px;width:810.5px;height:1.0px;background:#8c2d63;opacity:.5"></div>
<div class="a" style="left:23.5px;top:181.6px;width:810.5px;height:1.0px;background:#8c2d63;opacity:.5"></div>
<div class="a" style="left:23.5px;top:198.9px;width:810.5px;height:1.0px;background:#8c2d63;opacity:.5"></div>
<div class="a" style="left:23.5px;top:219.6px;width:810.5px;height:1.0px;background:#8c2d63;opacity:.5"></div>
<div class="a" style="left:23.5px;top:236.7px;width:810.5px;height:1.0px;background:#8c2d63;opacity:.5"></div>
<div class="a" style="left:23.5px;top:253.8px;width:810.5px;height:1.0px;background:#8c2d63;opacity:.5"></div>
<div class="a" style="left:23.5px;top:270.9px;width:810.5px;height:1.0px;background:#8c2d63;opacity:.5"></div>
<div class="a" style="left:23.5px;top:288.0px;width:810.5px;height:1.0px;background:#8c2d63;opacity:.5"></div>
<div class="a" style="left:23.5px;top:305.1px;width:810.5px;height:1.0px;background:#8c2d63;opacity:.5"></div>
<span class="t cd" style="left:26.0px;top:132.8px;letter-spacing:-.25px">Barnes G.</span>
<span class="t cd" style="left:123.0px;top:132.8px">M01-STA</span>
<span class="t cd" style="left:225.5px;width:30px;text-align:right;top:132.8px">13</span>
<span class="t cd" style="left:309.0px;width:30px;text-align:right;top:132.8px">14</span>
<span class="t cd" style="left:392.5px;width:30px;text-align:right;top:132.8px">11</span>
<span class="t cd" style="left:476.0px;width:30px;text-align:right;top:132.8px">15</span>
<span class="t cd" style="left:26.0px;top:150.0px;letter-spacing:-.25px">Bonino S.</span>
<span class="t cd" style="left:123.0px;top:150.0px">M02-STA</span>
<span class="t cd" style="left:225.5px;width:30px;text-align:right;top:150.0px">15</span>
<span class="t cd" style="left:309.0px;width:30px;text-align:right;top:150.0px">14</span>
<span class="t cd" style="left:392.5px;width:30px;text-align:right;top:150.0px">14</span>
<span class="t cd" style="left:476.0px;width:30px;text-align:right;top:150.0px">12</span>
<span class="t cd" style="left:26.0px;top:167.3px;letter-spacing:-.25px">Dalton B.</span>
<span class="t cd" style="left:123.0px;top:167.3px">M03-STA</span>
<span class="t cd" style="left:225.5px;width:30px;text-align:right;top:167.3px">8</span>
<span class="t cd" style="left:309.0px;width:30px;text-align:right;top:167.3px">0</span>
<span class="t cd" style="left:392.5px;width:30px;text-align:right;top:167.3px">11</span>
<span class="t cd" style="left:476.0px;width:30px;text-align:right;top:167.3px">7</span>
<span class="t cd" style="left:26.0px;top:184.5px;letter-spacing:-.25px">Djedid C.</span>
<span class="t cd" style="left:123.0px;top:184.5px">M04-STA</span>
<span class="t cd" style="left:225.5px;width:30px;text-align:right;top:184.5px">12</span>
<span class="t cd" style="left:309.0px;width:30px;text-align:right;top:184.5px">10</span>
<span class="t cd" style="left:392.5px;width:30px;text-align:right;top:184.5px">11</span>
<span class="t cd" style="left:476.0px;width:30px;text-align:right;top:184.5px">12</span>
<span class="t cd" style="left:26.0px;top:204.9px;letter-spacing:-.25px">Fischer G.</span>
<span class="t cd" style="left:123.0px;top:204.9px">M05-STA</span>
<span class="t cd" style="left:225.5px;width:30px;text-align:right;top:204.9px">14</span>
<span class="t cd" style="left:309.0px;width:30px;text-align:right;top:204.9px">15</span>
<span class="t cd" style="left:392.5px;width:30px;text-align:right;top:204.9px">14</span>
<span class="t cd" style="left:476.0px;width:30px;text-align:right;top:204.9px">8</span>
<span class="t cd" style="left:26.0px;top:222.0px;letter-spacing:-.25px">Habela Gruart R.</span>
<span class="t cd" style="left:123.0px;top:222.0px">M06-STA</span>
<span class="t cd" style="left:225.5px;width:30px;text-align:right;top:222.0px">9</span>
<span class="t cd" style="left:309.0px;width:30px;text-align:right;top:222.0px">14</span>
<span class="t cd" style="left:392.5px;width:30px;text-align:right;top:222.0px">14</span>
<span class="t cd" style="left:476.0px;width:30px;text-align:right;top:222.0px">13</span>
<span class="t cd" style="left:26.0px;top:239.1px;letter-spacing:-.25px">Hajira N.</span>
<span class="t cd" style="left:123.0px;top:239.1px">M07-STA</span>
<span class="t cd" style="left:225.5px;width:30px;text-align:right;top:239.1px">12</span>
<span class="t cd" style="left:309.0px;width:30px;text-align:right;top:239.1px">13</span>
<span class="t cd" style="left:392.5px;width:30px;text-align:right;top:239.1px">14</span>
<span class="t cd" style="left:476.0px;width:30px;text-align:right;top:239.1px">15</span>
<span class="t cd" style="left:26.0px;top:256.2px;letter-spacing:-.25px">Huchet N.</span>
<span class="t cd" style="left:123.0px;top:256.2px">M08-STA</span>
<span class="t cd" style="left:225.5px;width:30px;text-align:right;top:256.2px">15</span>
<span class="t cd" style="left:309.0px;width:30px;text-align:right;top:256.2px">16</span>
<span class="t cd" style="left:392.5px;width:30px;text-align:right;top:256.2px">7</span>
<span class="t cd" style="left:476.0px;width:30px;text-align:right;top:256.2px">14</span>
<span class="t cd" style="left:26.0px;top:273.3px;letter-spacing:-.25px">Morris A.</span>
<span class="t cd" style="left:123.0px;top:273.3px">M09-STA</span>
<span class="t cd" style="left:225.5px;width:30px;text-align:right;top:273.3px">11</span>
<span class="t cd" style="left:309.0px;width:30px;text-align:right;top:273.3px">0</span>
<span class="t cd" style="left:392.5px;width:30px;text-align:right;top:273.3px">12</span>
<span class="t cd" style="left:476.0px;width:30px;text-align:right;top:273.3px">14</span>
<span class="t cd" style="left:26.0px;top:290.4px;letter-spacing:-.25px">Ouyahyia M.</span>
<span class="t cd" style="left:123.0px;top:290.4px">M10-STA</span>
<span class="t cd" style="left:225.5px;width:30px;text-align:right;top:290.4px">11</span>
<span class="t cd" style="left:309.0px;width:30px;text-align:right;top:290.4px">12</span>
<span class="t cd" style="left:392.5px;width:30px;text-align:right;top:290.4px">9</span>
<span class="t cd" style="left:476.0px;width:30px;text-align:right;top:290.4px">10</span>
<span class="t cd" style="left:829.5px;top:132.8px">6</span>
<span class="t cd" style="left:829.5px;top:150.0px">8</span>
<span class="t cd" style="left:829.5px;top:167.3px">6</span>
<span class="t cd" style="left:829.5px;top:184.5px">6</span>
<span class="t cd" style="left:829.5px;top:204.9px">7</span>
<span class="t cd" style="left:829.5px;top:222.0px">7</span>
<span class="t cd" style="left:829.5px;top:239.1px">8</span>
<span class="t cd" style="left:829.5px;top:256.2px">8</span>
<span class="t cd" style="left:829.5px;top:273.3px">6</span>
<span class="t cd" style="left:829.5px;top:290.4px">4</span>
<div class="a" style="left:0.0px;top:199.6px;width:834.0px;height:3.4px;background:#e6e6e6;border-top:1px solid #cfcfcf;border-bottom:1px solid #cfcfcf"></div>
</div>
<!-- ===== Sheet tabs / status bar ===== -->
<div class="a" style="left:166px;top:471.500px;width:834px;height:19px;background:#e6e6e6;border-top:1px solid #cfcfcf"></div>
<div class="a" style="left:162px;top:166px;width:4.500px;height:325px;background:#eeeeee"></div>
<svg style="left:187px;top:478px" width="28" height="7" viewBox="0 0 28 7"><path d="M4 0.500L1 3.500L4 6.500M22 0.500L25 3.500L22 6.500" fill="none" stroke="#c6c6c6" stroke-width="1.300"/></svg>
<div class="a" style="left:249px;top:472px;width:72px;height:18px;background:#f6f6f6;border-bottom:2px solid #217346"></div>
<span class="t" style="left:259px;top:476px;font-size:10.800px;font-weight:bold;color:#217346">Third year</span>
<svg style="left:348px;top:475px" width="13" height="13" viewBox="0 0 13 13"><circle cx="6.500" cy="6.500" r="5.800" fill="#efefef" stroke="#7a7a7a" stroke-width="1"/><path d="M6.500 3.500V9.500M3.500 6.500H9.500" stroke="#555" stroke-width="1.100"/></svg>
<div class="a" style="left:677px;top:477px;width:1px;height:1px;background:#999;box-shadow:0 3px 0 #999,0 6px 0 #999"></div>
<div class="a" style="left:691px;top:475px;width:12px;height:12px;background:#fdfdfd;border:1px solid #c4c4c4"></div>
<svg style="left:695px;top:478px" width="4" height="6" viewBox="0 0 4 6"><path d="M4 0V6L0.500 3Z" fill="#555"/></svg>
<div class="a" style="left:0;top:490.500px;width:1000px;height:18px;background:#f1f1f1;border-top:1px solid #d0d0d0"></div>
<span class="t dj" style="left:6.500px;top:496px;font-size:8.400px;color:#444">Ready</span>
<!-- ===== Tutorial panel ===== -->
<div id="panel" class="a">
  <div class="a" style="left:0;top:0;width:291px;height:17.500px;background:#c9c9c9"></div>
  <div class="a" style="left:0;top:17.500px;width:291px;height:93px;background:#ececec"></div>
  <svg style="left:20px;top:17px" width="13" height="9" viewBox="0 0 13 9"><path d="M0 0H13L6.500 9Z" fill="#c9c9c9"/></svg>
  <span class="pt" style="left:18px;top:4.500px;font-size:9.500px;font-weight:bold;color:#222">4/7</span>
  <span class="pt" style="left:232px;top:6px;font-size:7.500px;color:#8d8d8d;letter-spacing:-.1px">EXIT</span>
  <svg style="left:267px;top:5px" width="8" height="8" viewBox="0 0 8 8"><path d="M0.800 0.800L7.200 7.200M7.200 0.800L0.800 7.200" stroke="#6a6a6a" stroke-width="1.700"/></svg>
  <span class="pt" style="left:19.500px;top:31.500px;font-size:11.600px;font-weight:bold;color:#1b1b1b;letter-spacing:-.02px">Splitting the window, freezing a</span>
  <span class="pt" style="left:19.500px;top:44.500px;font-size:11.600px;font-weight:bold;color:#1b1b1b">column/row</span>
  <div class="a" style="left:72px;top:70px;width:147.500px;height:19px;background:#6c6468"></div>
  <span class="pt" style="left:120.500px;top:75px;font-size:9px;font-weight:bold;color:#fff;letter-spacing:.1px">Lesson</span>
  <svg style="left:181px;top:72px" width="15" height="14" viewBox="0 0 15 14"><path d="M4.500 4V2A1 1 0 0 1 5.500 1H9.500A1 1 0 0 1 10.500 2V4" fill="none" stroke="#fff" stroke-width="1.300"/><rect x="0.500" y="4" width="14" height="9.500" fill="#fff"/><path d="M0.500 8.200H14.500" stroke="#cfc9cc" stroke-width=".8"/></svg>
  <div class="pb" style="left:0;top:110.500px;width:291px;height:17px"></div>
  <span class="pt" style="left:121px;top:114px;font-size:10.200px;font-weight:bold;color:#fff;letter-spacing:-.15px">Exercise</span>
  <div class="a" id="ptext" style="left:18.500px;top:137px;font-size:11px;line-height:12px;color:#2a2a2a;white-space:nowrap;letter-spacing:.12px"><p>To make the table easier to read,</p><p>- deactivate the option which shows two</p><p>views of the workbook</p><p>- <b>freeze</b> columns <b>A</b> and <b>B</b> on the screen</p><p>- display columns <b>B</b> and <b>K side by side</b>.</p></div>
  <div class="pb" style="left:21px;top:213px;width:100px;height:17px"></div>
  <span class="pt" style="left:46px;top:218px;font-size:7.800px;font-weight:bold;color:#fff;font-family:'Liberation Sans',sans-serif;font-size:8.600px">Start again</span>
  <svg style="left:100px;top:215.500px" width="11" height="12" viewBox="0 0 11 12"><path d="M1.500 5.500A4 4 0 0 1 8 3M9.500 6.500A4 4 0 0 1 3 9" fill="none" stroke="#fff" stroke-width="1.600"/><path d="M6.300 0.500L9.800 3.300L6 4.800ZM4.700 11.500L1.200 8.700L5 7.200Z" fill="#fff"/></svg>
  <div class="pb" style="left:138px;top:213px;width:125.500px;height:17px"></div>
  <span class="pt" style="left:162px;top:218px;font-weight:bold;color:#fff;font-family:'Liberation Sans',sans-serif;font-size:8.600px">Enter my solution</span>
  <svg style="left:244px;top:216px" width="11" height="10" viewBox="0 0 11 10"><path d="M1 5.500L4 8.500L10 1" fill="none" stroke="#fff" stroke-width="2"/></svg>
  <div class="a" style="left:0;top:244.500px;width:291px;height:27.500px;background:#ececec"></div>
  <svg style="left:19px;top:247px" width="29" height="22" viewBox="0 0 29 22"><ellipse cx="15.500" cy="10.500" rx="13" ry="8.600" fill="#b9b3b6" transform="rotate(-16 15.500 10.500)"/><ellipse cx="13.800" cy="11" rx="12.600" ry="8.600" fill="#6b6169" transform="rotate(-16 13.800 11)"/><text x="3.500" y="17" font-family="Liberation Serif,serif" font-style="italic" font-weight="bold" font-size="19" fill="#fff">m</text></svg>
  <span class="pt" style="left:58px;top:254.500px;font-size:9.400px;color:#8a8a8a">Ref:438309</span>
  <svg style="left:279px;top:260px" width="12" height="12" viewBox="0 0 12 12"><path d="M1 12L12 1M4.500 12L12 4.500M8 12L12 8" stroke="#7d7d7d" stroke-width="1"/></svg>
</div>
<!-- ===== Windows 7 taskbar ===== -->
<div class="a" style="left:0;top:508.500px;width:1000px;height:30px;background:linear-gradient(90deg,#a8c1de 0,#a8c1de 78.500%,#7a99be 81.500%,#6c8bb3 84%,#6b8ab2 100%)"></div>
<div class="a" style="left:0;top:508.500px;width:1000px;height:30px;background:linear-gradient(180deg,rgba(255,255,255,.30) 0,rgba(255,255,255,.05) 2px,rgba(255,255,255,0) 50%,rgba(40,70,110,.04) 100%)"></div>
<div class="a" style="left:0;top:508.500px;width:49px;height:30px;background:linear-gradient(90deg,#7e90aa,#8b9db6 12%,#8c9eb7)"></div>
<!-- start orb -->
<svg style="left:8.300px;top:509.800px" width="29" height="28" viewBox="0 0 32 31">
  <defs><radialGradient id="orb" cx="50%" cy="85%" r="80%"><stop offset="0" stop-color="#6fd0f2"/><stop offset=".35" stop-color="#2b7fc4"/><stop offset=".75" stop-color="#1b3f7c"/><stop offset="1" stop-color="#13294f"/></radialGradient>
  <linearGradient id="orbhi" x1="0" y1="0" x2="0" y2="1"><stop offset="0" stop-color="#fff" stop-opacity=".55"/><stop offset="1" stop-color="#fff" stop-opacity="0"/></linearGradient></defs>
  <circle cx="16" cy="15.500" r="15" fill="url(#orb)" stroke="#5f7696" stroke-width=".8"/>
  <path d="M3 11A13.500 13.500 0 0 1 29 11C22 15 10 15 3 11Z" fill="url(#orbhi)"/>
  <path d="M8.200 8.300C10.500 6.600 12.800 6.600 15.200 8L14 14.200C11.700 12.800 9.300 12.800 7 14.500Z" fill="#ef5a2b"/>
  <path d="M16.600 8.400C19 9.700 21.400 9.600 24 8L22.800 14.200C20.300 15.800 17.800 15.800 15.300 14.600Z" fill="#86c440"/>
  <path d="M6.600 16C9 14.400 11.300 14.400 13.700 15.800L12.500 22C10.200 20.600 7.800 20.600 5.400 22.200Z" fill="#43a6ea"/>
  <path d="M15 16.200C17.500 17.500 20 17.400 22.500 15.800L21.300 22C18.800 23.600 16.300 23.600 13.800 22.400Z" fill="#fcc52c"/>
</svg>
<!-- IE button -->
<div class="a" style="left:50px;top:509.500px;width:48.500px;height:28.500px;background:linear-gradient(180deg,#d6deea,#c6d2e3 55%,#c9d6e8);border:1px solid #8296b2;border-radius:2px;box-shadow:inset 0 0 0 1px rgba(255,255,255,.55)"></div>
<svg style="left:61px;top:510.500px" width="30" height="27" viewBox="0 0 30 27">
  <path d="M25.500 7.500C27.800 3.500 25 1.500 19.500 3.200C10 6 1.500 15.500 3.200 21.500C4.300 25 9.500 23.500 13.500 20.500" fill="none" stroke="#f0bd3a" stroke-width="1.900"/>
  <path d="M4.500 13.500A9.800 9.800 0 0 1 24.200 13V15.500H10C10.300 20.300 17.300 21.300 20.300 17.800H23.800C20 26 5 24.200 4.500 13.500ZM10.200 11.500H19C18.500 7 10.800 7 10.200 11.500Z" fill="#39b4ea" stroke="#1d8fd0" stroke-width=".6"/>
  <path d="M19.500 3.200C22 2.400 24.500 2.600 25.300 4" fill="none" stroke="#f0bd3a" stroke-width="1.900"/>
</svg>
<!-- explorer -->
<svg style="left:112px;top:513px" width="28" height="23" viewBox="0 0 28 23">
  <path d="M1 3A1.500 1.500 0 0 1 2.500 1.500H10L12 3.500H25.500A1.500 1.500 0 0 1 27 5V19H1Z" fill="#efcf6e" stroke="#c4a245" stroke-width=".8"/>
  <rect x="3.500" y="3.800" width="21" height="4.500" fill="#fdf6d8"/>
  <circle cx="5" cy="3.200" r="1.300" fill="#6fa86a"/><circle cx="10.500" cy="5" r="1.200" fill="#8a5a3a"/><circle cx="16" cy="5" r="1.200" fill="#8a5a3a"/><circle cx="21" cy="5" r="1.200" fill="#a86a3a"/>
  <path d="M1.500 8.500H26.500V19.500H1.500Z" fill="#f7e58f" stroke="#dcbb55" stroke-width=".6"/>
  <path d="M4 14.500C8 12 18 12 22 14.500V22.500H4Z" fill="#6db6e6"/><path d="M7.500 18H18.500V22.500H7.500Z" fill="#b5dcf5"/>
</svg>
<!-- media player -->
<svg style="left:164px;top:514px" width="24" height="21" viewBox="0 0 24 21">
  <rect x="5" y="1" width="17.500" height="17.500" rx="1.500" fill="#8ec1ea" stroke="#4f8cc4" stroke-width="1"/>
  <circle cx="10.500" cy="10.500" r="8.500" fill="#f08a24" stroke="#fff" stroke-width="1.300"/>
  <path d="M8 6.300L15.500 10.500L8 14.700Z" fill="#fff"/>
</svg>
<!-- Excel button -->
<div class="a" style="left:204px;top:509.500px;width:48.500px;height:28.500px;background:linear-gradient(180deg,#d4dbe8,#c3cde0 55%,#c5d0e3);border:1px solid #7f93b0;border-radius:2px;box-shadow:inset 0 0 0 1px rgba(255,255,255,.45)"></div>
<svg style="left:214px;top:512px" width="28" height="22" viewBox="0 0 28 22">
  <rect x="12" y="2.500" width="14.500" height="17" fill="#fff" stroke="#1e7145" stroke-width="1"/>
  <path d="M15 5.500H18M20 5.500H24M15 8.500H18M20 8.500H24M15 11.500H18M20 11.500H24M15 14.500H18M20 14.500H24M15 17H18M20 17H24" stroke="#1e7145" stroke-width="1.600"/>
  <path d="M1 2.500L16 0V22L1 19.500Z" fill="#1e7145"/>
  <text x="4.300" y="15.500" font-family="Liberation Sans,sans-serif" font-weight="bold" font-size="12" fill="#fff">X</text>
</svg>
<!-- tray -->
<span class="t w" style="left:829px;top:517px;font-size:9.400px;color:#eef3f9">EN</span>
<svg style="left:855px;top:520.500px" width="7" height="5" viewBox="0 0 7 5"><path d="M0.500 4.500L3.500 0.800L6.500 4.500Z" fill="#f2f6fa"/></svg>
<svg style="left:871px;top:516px" width="15" height="13" viewBox="0 0 15 13"><path d="M1.500 0.500V12.500" stroke="#fff" stroke-width="1.300"/><path d="M2.500 1.500C5 0.500 6 2.500 8.500 2V7C6 7.500 5 5.500 2.500 6.500Z" fill="#fff"/><path d="M9.500 2.500C11 2.800 12 2.300 13.500 2V6.500C12 7 11 7.300 9.500 7Z" fill="#e8eef6"/></svg>
<svg style="left:891px;top:516px" width="15" height="14" viewBox="0 0 15 14"><rect x="4" y="3.500" width="9.500" height="6.500" fill="#5f7fa8" stroke="#fff" stroke-width="1.200"/><rect x="0.800" y="0.800" width="5" height="4" fill="#d4dfec" stroke="#fff" stroke-width=".8"/><path d="M6.500 12.500H11.500M9 10V12.500" stroke="#fff" stroke-width="1.200"/></svg>
<svg style="left:912px;top:516px" width="14" height="13" viewBox="0 0 14 13"><path d="M0.800 4.500H3.500L7 1V12L3.500 8.500H0.800Z" fill="#fff"/><path d="M9 4A3.600 3.600 0 0 1 9 9M10.800 2A6.300 6.300 0 0 1 10.800 11" fill="none" stroke="#fff" stroke-width="1"/></svg>
<span class="t w" style="left:938px;top:513.500px;width:52px;text-align:center;font-size:9.600px;color:#f4f7fb">12:46</span>
<span class="t w" style="left:934px;top:525.500px;width:60px;text-align:center;font-size:9.600px;color:#f4f7fb">02/11/2016</span>
<!-- Citrix bottom bar -->
<div class="a" style="left:0;top:538.500px;width:1000px;height:12px;background:#1166b3"></div>
<span class="t w" style="left:5.500px;top:545.500px;font-size:9.500px;font-weight:bold;letter-spacing:.3px">CITRIX</span>
</div>
</body>
</html>
